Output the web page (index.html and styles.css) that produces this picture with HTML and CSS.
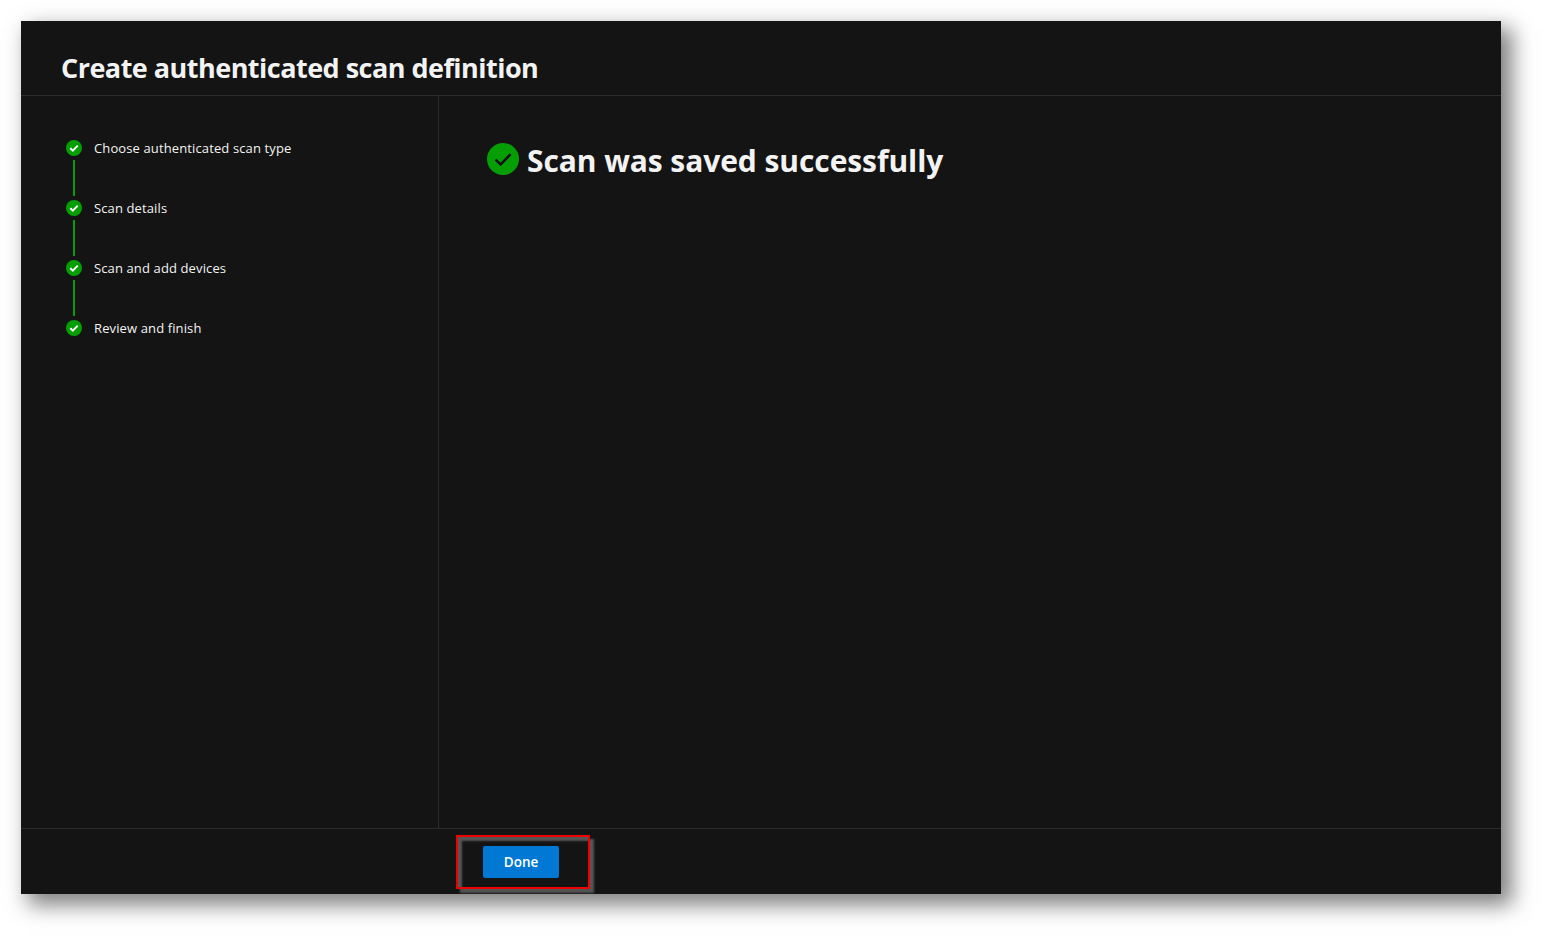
FILE: index.html
```html
<!DOCTYPE html>
<html lang="en">
<head>
<meta charset="utf-8">
<title>Create authenticated scan definition</title>
<link rel="stylesheet" href="styles.css">
</head>
<body>
<div class="panel">
  <header class="header"><h1 class="title">Create authenticated scan definition</h1></header>
  <div class="middle">
    <nav class="steps">
      <div class="step">
        <div class="marker">
          <svg class="step-icon" viewBox="0 0 16 16"><circle cx="8" cy="8" r="8" fill="#059f05"/><path d="M4.3 8.3l2.5 2.3 4.9-5" fill="none" stroke="#fff" stroke-width="1.9"/></svg>
          <span class="line"></span>
        </div>
        <span class="label">Choose authenticated scan type</span>
      </div>
      <div class="step">
        <div class="marker">
          <svg class="step-icon" viewBox="0 0 16 16"><circle cx="8" cy="8" r="8" fill="#059f05"/><path d="M4.3 8.3l2.5 2.3 4.9-5" fill="none" stroke="#fff" stroke-width="1.9"/></svg>
          <span class="line"></span>
        </div>
        <span class="label">Scan details</span>
      </div>
      <div class="step">
        <div class="marker">
          <svg class="step-icon" viewBox="0 0 16 16"><circle cx="8" cy="8" r="8" fill="#059f05"/><path d="M4.3 8.3l2.5 2.3 4.9-5" fill="none" stroke="#fff" stroke-width="1.9"/></svg>
          <span class="line"></span>
        </div>
        <span class="label">Scan and add devices</span>
      </div>
      <div class="step">
        <div class="marker">
          <svg class="step-icon" viewBox="0 0 16 16"><circle cx="8" cy="8" r="8" fill="#059f05"/><path d="M4.3 8.3l2.5 2.3 4.9-5" fill="none" stroke="#fff" stroke-width="1.9"/></svg>
        </div>
        <span class="label">Review and finish</span>
      </div>
    </nav>
    <main class="content">
      <div class="success">
        <svg class="success-icon" viewBox="0 0 32 32"><circle cx="16" cy="16" r="16" fill="#059f05"/><path d="M8.6 16.6l5 4.8 10-10.2" fill="none" stroke="#141414" stroke-width="2.6"/></svg>
        <h2 class="success-text">Scan was saved successfully</h2>
      </div>
    </main>
  </div>
  <footer class="footer">
    <button class="done" type="button">Done</button>
  </footer>
  <div class="callout"></div>
</div>
</body>
</html>
```
FILE: styles.css
```css
* { box-sizing: border-box; }
html, body { margin: 0; height: 100%; }
body {
  background: #fff;
  padding: 21px 0 0 21px;
  font-family: "Open Sans", "Noto Sans", sans-serif;
  overflow: hidden;
}
.panel {
  position: relative;
  width: 1480px;
  height: 873px;
  background: #141414;
  color: #f3f3f3;
  display: flex;
  flex-direction: column;
  box-shadow: 9px 9px 20px 2px rgba(0, 0, 0, 0.5);
}
.header {
  height: 75px;
  flex: none;
  border-bottom: 1px solid #2b2b2b;
  padding: 28px 0 0 40px;
}
.title {
  margin: 0;
  font-size: 27px;
  line-height: 38px;
  font-weight: 700;
  letter-spacing: -0.52px;
  white-space: nowrap;
}
.middle { flex: 1; display: flex; min-height: 0; }
.steps {
  width: 418px;
  flex: none;
  border-right: 1px solid #2b2b2b;
  padding: 44px 0 0 45px;
}
.step { display: flex; height: 60px; }
.marker { width: 16px; display: flex; flex-direction: column; align-items: center; margin-right: 12px; }
.step-icon { width: 16px; height: 16px; display: block; flex: none; }
.line { width: 2px; height: 36px; margin-top: 4px; background: #059f05; }
.label { font-size: 13px; line-height: 16px; letter-spacing: 0.12px; color: #f3f3f3; white-space: nowrap; }
.content { flex: 1; padding: 44px 0 0 48px; }
.success { display: flex; align-items: center; height: 42px; }
.success-icon { width: 32px; height: 32px; flex: none; margin: 0 8px 4px 0; }
.success-text {
  margin: 0;
  font-size: 30px;
  line-height: 42px;
  font-weight: 700;
  letter-spacing: -0.08px;
  white-space: nowrap;
}
.footer {
  height: 66px;
  flex: none;
  border-top: 1px solid #2b2b2b;
  padding: 17px 0 0 462px;
}
.done {
  display: block;
  width: 76px;
  height: 32px;
  padding: 0;
  border: 0;
  border-radius: 2px;
  background: #0078d4;
  color: #fff;
  font-family: inherit;
  font-size: 13.5px;
  font-weight: 600;
}
.callout {
  position: absolute;
  left: 435px;
  top: 814px;
  width: 134px;
  height: 54px;
  border: 2px solid #f00000;
  box-shadow: 4px 4px 2px 0 rgba(120, 120, 120, 0.65), inset 4px 4px 2px 0 rgba(120, 120, 120, 0.65);
}
```
